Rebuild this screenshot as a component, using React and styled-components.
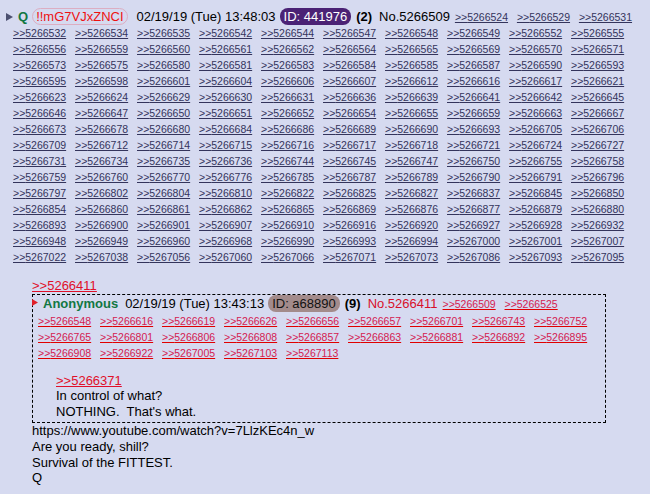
import React from 'react'
import styled, { createGlobalStyle } from 'styled-components'

const GlobalStyle = createGlobalStyle`
  html, body {
    margin: 0;
    padding: 0;
    background: #d6daf0;
  }
  body {
    font-family: "Liberation Sans", Arial, sans-serif;
    font-size: 13px;
    color: #000;
  }
`

const outerLinks = `5266524 5266529 5266531
5266532 5266534 5266535 5266542 5266544 5266547 5266548 5266549 5266552 5266555
5266556 5266559 5266560 5266561 5266562 5266564 5266565 5266569 5266570 5266571
5266573 5266575 5266580 5266581 5266583 5266584 5266585 5266587 5266590 5266593
5266595 5266598 5266601 5266604 5266606 5266607 5266612 5266616 5266617 5266621
5266623 5266624 5266629 5266630 5266631 5266636 5266639 5266641 5266642 5266645
5266646 5266647 5266650 5266651 5266652 5266654 5266655 5266659 5266663 5266667
5266673 5266678 5266680 5266684 5266686 5266689 5266690 5266693 5266705 5266706
5266709 5266712 5266714 5266715 5266716 5266717 5266718 5266721 5266724 5266727
5266731 5266734 5266735 5266736 5266744 5266745 5266747 5266750 5266755 5266758
5266759 5266760 5266770 5266776 5266785 5266787 5266789 5266790 5266791 5266796
5266797 5266802 5266804 5266810 5266822 5266825 5266827 5266837 5266845 5266850
5266854 5266860 5266861 5266862 5266865 5266869 5266876 5266877 5266879 5266880
5266893 5266900 5266901 5266907 5266910 5266916 5266920 5266927 5266928 5266932
5266948 5266949 5266960 5266968 5266990 5266993 5266994 5267000 5267001 5267007
5267022 5267038 5267056 5267060 5267066 5267071 5267073 5267086 5267093 5267095`.split(/\s+/)

const innerLinks = `5266509 5266525
5266548 5266616 5266619 5266626 5266656 5266657 5266701 5266743 5266752
5266765 5266801 5266806 5266808 5266857 5266863 5266881 5266892 5266895
5266908 5266922 5267005 5267103 5267113`.split(/\s+/)

const Page = styled.div`
  padding: 9px 5px 0 5px;
  min-height: 494px;
  box-sizing: border-box;
`

const PostInfo = styled.div`
  padding-left: 3px;
  line-height: 16px;
`

const Arrow = styled.svg`
  display: inline-block;
  vertical-align: top;
  margin-left: ${p => p.$inset};
  margin-right: ${p => p.$gap};
`

const Name = styled.span`
  color: #117743;
  font-weight: bold;
`

const Trip = styled.span`
  color: #ee1111;
  border: 1px solid #dcaec2;
  border-radius: 9px;
  padding: 0 3px;
  margin-left: 4px;
`

const DateTime = styled.span`
  margin-left: ${p => p.$gap};
`

const IdPill = styled.span`
  background: ${p => p.$bg};
  color: ${p => p.$fg};
  border-radius: 8px;
  padding: 1px 4px;
  margin-left: ${p => p.$gap};
`

const Count = styled.span`
  font-weight: bold;
  margin-left: 5px;
`

const PostNo = styled.span`
  margin-left: ${p => p.$gap};
  color: ${p => p.$color || '#000'};
`

const Backlink = styled.a`
  display: inline-block;
  vertical-align: top;
  width: 54px;
  margin: 0 3px 0 5px;
  font-size: 10.5px;
  line-height: 16px;
  white-space: nowrap;
  color: ${p => (p.$red ? '#d42050' : '#34345c')};
  text-decoration: underline;
  text-decoration-color: ${p => (p.$red ? '#e00000' : '#34345c')};
  cursor: pointer;
`

const Body = styled.div`
  margin: 13px 0 0 27px;
  line-height: 15.67px;
`

const Quote = styled.a`
  color: #e0102a;
  text-decoration: underline;
  cursor: pointer;
`

const QuotedPost = styled.div`
  width: 572px;
  border: 1px dashed #000;
`

const InnerInfo = styled.div`
  padding-top: 1px;
  line-height: 16px;
`

const InnerText = styled.div`
  margin: 12px 0 3px 23px;
  line-height: 15.5px;
`

const Line = styled.div``

function Triangle({ color, w, h, tri, inset, gap }) {
  return (
    <Arrow width={w} height={h} viewBox={`0 0 ${w} ${h}`} $inset={inset} $gap={gap}>
      <polygon points={tri} fill={color} />
    </Arrow>
  )
}

export default function App() {
  const outerHead = outerLinks.slice(0, 3)
  const outerRest = outerLinks.slice(3)
  const innerHead = innerLinks.slice(0, 2)
  const innerRest = innerLinks.slice(2)

  return (
    <>
      <GlobalStyle />
      <Page>
        <PostInfo>
          <Triangle color="#4c5070" w={8} h={16} tri="1,4 8,8 1,12" inset="-3px" gap="5px" />
          <Name>Q</Name>
          <Trip>!!mG7VJxZNCI</Trip>
          <DateTime $gap="9px">02/19/19 (Tue) 13:48:03</DateTime>
          <IdPill $bg="#4b2275" $fg="#fff" $gap="4px">ID: 441976</IdPill>
          <Count>(2)</Count>
          <PostNo $gap="7px">No.5266509</PostNo>
          {outerHead.map(n => <Backlink key={n}>&gt;&gt;{n}</Backlink>)}
          {outerRest.map(n => <Backlink key={n}>&gt;&gt;{n}</Backlink>)}
        </PostInfo>

        <Body>
          <Quote>&gt;&gt;5266411</Quote>
          <QuotedPost>
            <InnerInfo>
              <Triangle color="#e01f2a" w={6} h={17} tri="0,3 6,6.5 0,10" inset="-1px" gap="5px" />
              <Name>Anonymous</Name>
              <DateTime $gap="7px">02/19/19 (Tue) 13:43:13</DateTime>
              <IdPill $bg="#a38b8b" $fg="#111" $gap="4px">ID: a68890</IdPill>
              <Count>(9)</Count>
              <PostNo $gap="7px" $color="#d8102a">No.5266411</PostNo>
              {innerHead.map(n => <Backlink key={n} $red>&gt;&gt;{n}</Backlink>)}
              {innerRest.map(n => <Backlink key={n} $red>&gt;&gt;{n}</Backlink>)}
            </InnerInfo>
            <InnerText>
              <Quote>&gt;&gt;5266371</Quote>
              <Line>In control of what?</Line>
              <Line>NOTHING.&nbsp; That's what.</Line>
            </InnerText>
          </QuotedPost>
          <Line>https://www.youtube.com/watch?v=7LlzKEc4n_w</Line>
          <Line>Are you ready, shill?</Line>
          <Line>Survival of the FITTEST.</Line>
          <Line>Q</Line>
        </Body>
      </Page>
    </>
  )
}
